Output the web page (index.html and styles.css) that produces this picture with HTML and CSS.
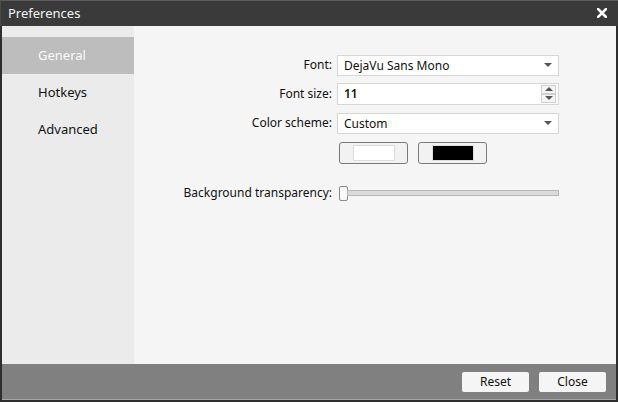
FILE: index.html
```html
<!DOCTYPE html>
<html>
<head>
<meta charset="utf-8">
<link rel="stylesheet" href="styles.css">
</head>
<body>
<div class="window">
  <div class="titlebar">
    <span class="title">Preferences</span>
    <svg class="close" width="10" height="10" viewBox="0 0 10 10"><path d="M1 1L9 9M9 1L1 9" stroke="#fff" stroke-width="2.6" stroke-linecap="square"/></svg>
  </div>
  <div class="main">
    <nav class="sidebar">
      <div class="item selected">General</div>
      <div class="item">Hotkeys</div>
      <div class="item">Advanced</div>
    </nav>
    <section class="content">
      <div class="form">
        <label class="lbl">Font:</label>
        <div class="field combo"><span>DejaVu Sans Mono</span><span class="arrow"></span></div>
        <label class="lbl">Font size:</label>
        <div class="field spin"><span>11</span><span class="spinbtns"><span class="sb up"></span><span class="sb down"></span></span></div>
        <label class="lbl">Color scheme:</label>
        <div class="field combo"><span>Custom</span><span class="arrow"></span></div>
        <span></span>
        <div class="swatches">
          <button class="swatch"><span class="chip white"></span></button>
          <button class="swatch"><span class="chip black"></span></button>
        </div>
        <label class="lbl slbl">Background transparency:</label>
        <div class="slider"><span class="handle"></span><span class="groove"></span></div>
      </div>
    </section>
  </div>
  <div class="footer">
    <button class="btn">Reset</button>
    <button class="btn">Close</button>
  </div>
</div>
</body>
</html>
```
FILE: styles.css
```css
* { box-sizing: border-box; }
html, body { margin: 0; padding: 0; }
body { width: 618px; height: 402px; overflow: hidden; font-family: "Noto Sans", sans-serif; font-size: 12px; color: #111; }
.window { width: 618px; height: 402px; display: flex; flex-direction: column; background: #2e2e2e; padding: 0 2px 2px 2px; }
.titlebar { height: 26px; margin: 0 -2px; border-top: 1px solid #5a5a5a; background: #3a3a3a; display: flex; align-items: center; justify-content: space-between; padding: 0 11px 1px 7px; border-left: 1px solid #4a4a4a; }
.title { color: #f2f2f2; font-size: 13px; }
.close { display: block; }
.main { flex: 1; display: flex; min-height: 0; }
.sidebar { width: 132px; background: #ebebeb; padding-top: 11px; }
.item { height: 37px; line-height: 36px; padding-left: 36px; font-size: 13px; color: #111; }
.item.selected { background: #bdbdbd; color: #fafafa; }
.content { flex: 1; background: #f5f5f5; padding: 29px 57px 0 0; }
.form { display: grid; grid-template-columns: auto 222px; justify-content: end; column-gap: 5px; align-items: center; }
.lbl { text-align: right; white-space: nowrap; line-height: 16px; padding-bottom: 8px; }
.field { height: 21px; background: #fff; border: 1px solid #d6d6d6; display: flex; align-items: center; justify-content: space-between; padding: 0 6px 1px 6px; margin-bottom: 7px; }
.field.spin { height: 22px; margin-bottom: 8px; padding-right: 2px; font-weight: 600; }
.arrow { width: 0; height: 0; border-left: 4px solid transparent; border-right: 4px solid transparent; border-top: 4px solid #555; margin-right: 0; }
.spinbtns { display: flex; flex-direction: column; width: 15px; }
.sb { height: 9px; border: 1px solid #d0d0d0; background: #f5f5f5; display: flex; align-items: center; justify-content: center; }
.sb.up::after { content: ""; border-left: 4px solid transparent; border-right: 4px solid transparent; border-bottom: 4px solid #555; }
.sb.down::after { content: ""; border-left: 4px solid transparent; border-right: 4px solid transparent; border-top: 4px solid #555; }
.swatches { display: flex; gap: 10px; padding-left: 2px; margin-top: 1px; }
.swatch { width: 69px; height: 22px; border: 1px solid #7a7a7a; border-radius: 3px; background: #f2f2f2; padding: 0; display: flex; align-items: center; justify-content: center; }
.chip { width: 42px; height: 16px; }
.chip.white { background: #fff; border: 1px solid #ddd; }
.chip.black { background: #000; border: 1px solid #ddd; width: 42px; }
.slbl { margin-top: 21px; padding-bottom: 0; }
.slider { margin-top: 21px; display: flex; align-items: center; height: 15px; padding-left: 2px; }
.handle { width: 9px; height: 15px; border: 1px solid #8a8a8a; border-radius: 2px; background: #fafafa; }
.groove { flex: 1; height: 6px; border: 1px solid #b8b8b8; background: #dadada; margin-left: -1px; }
.footer { height: 36px; background: #808080; display: flex; justify-content: flex-end; align-items: flex-start; gap: 10px; padding: 8px 10px 0 0; border-bottom: 1px solid #a6a6a6; }
.btn { width: 67px; height: 20px; border: none; border-radius: 2px; background: #f5f5f5; font-family: "Noto Sans", sans-serif; font-size: 12px; color: #111; padding: 0 0 1px 0; }
```
